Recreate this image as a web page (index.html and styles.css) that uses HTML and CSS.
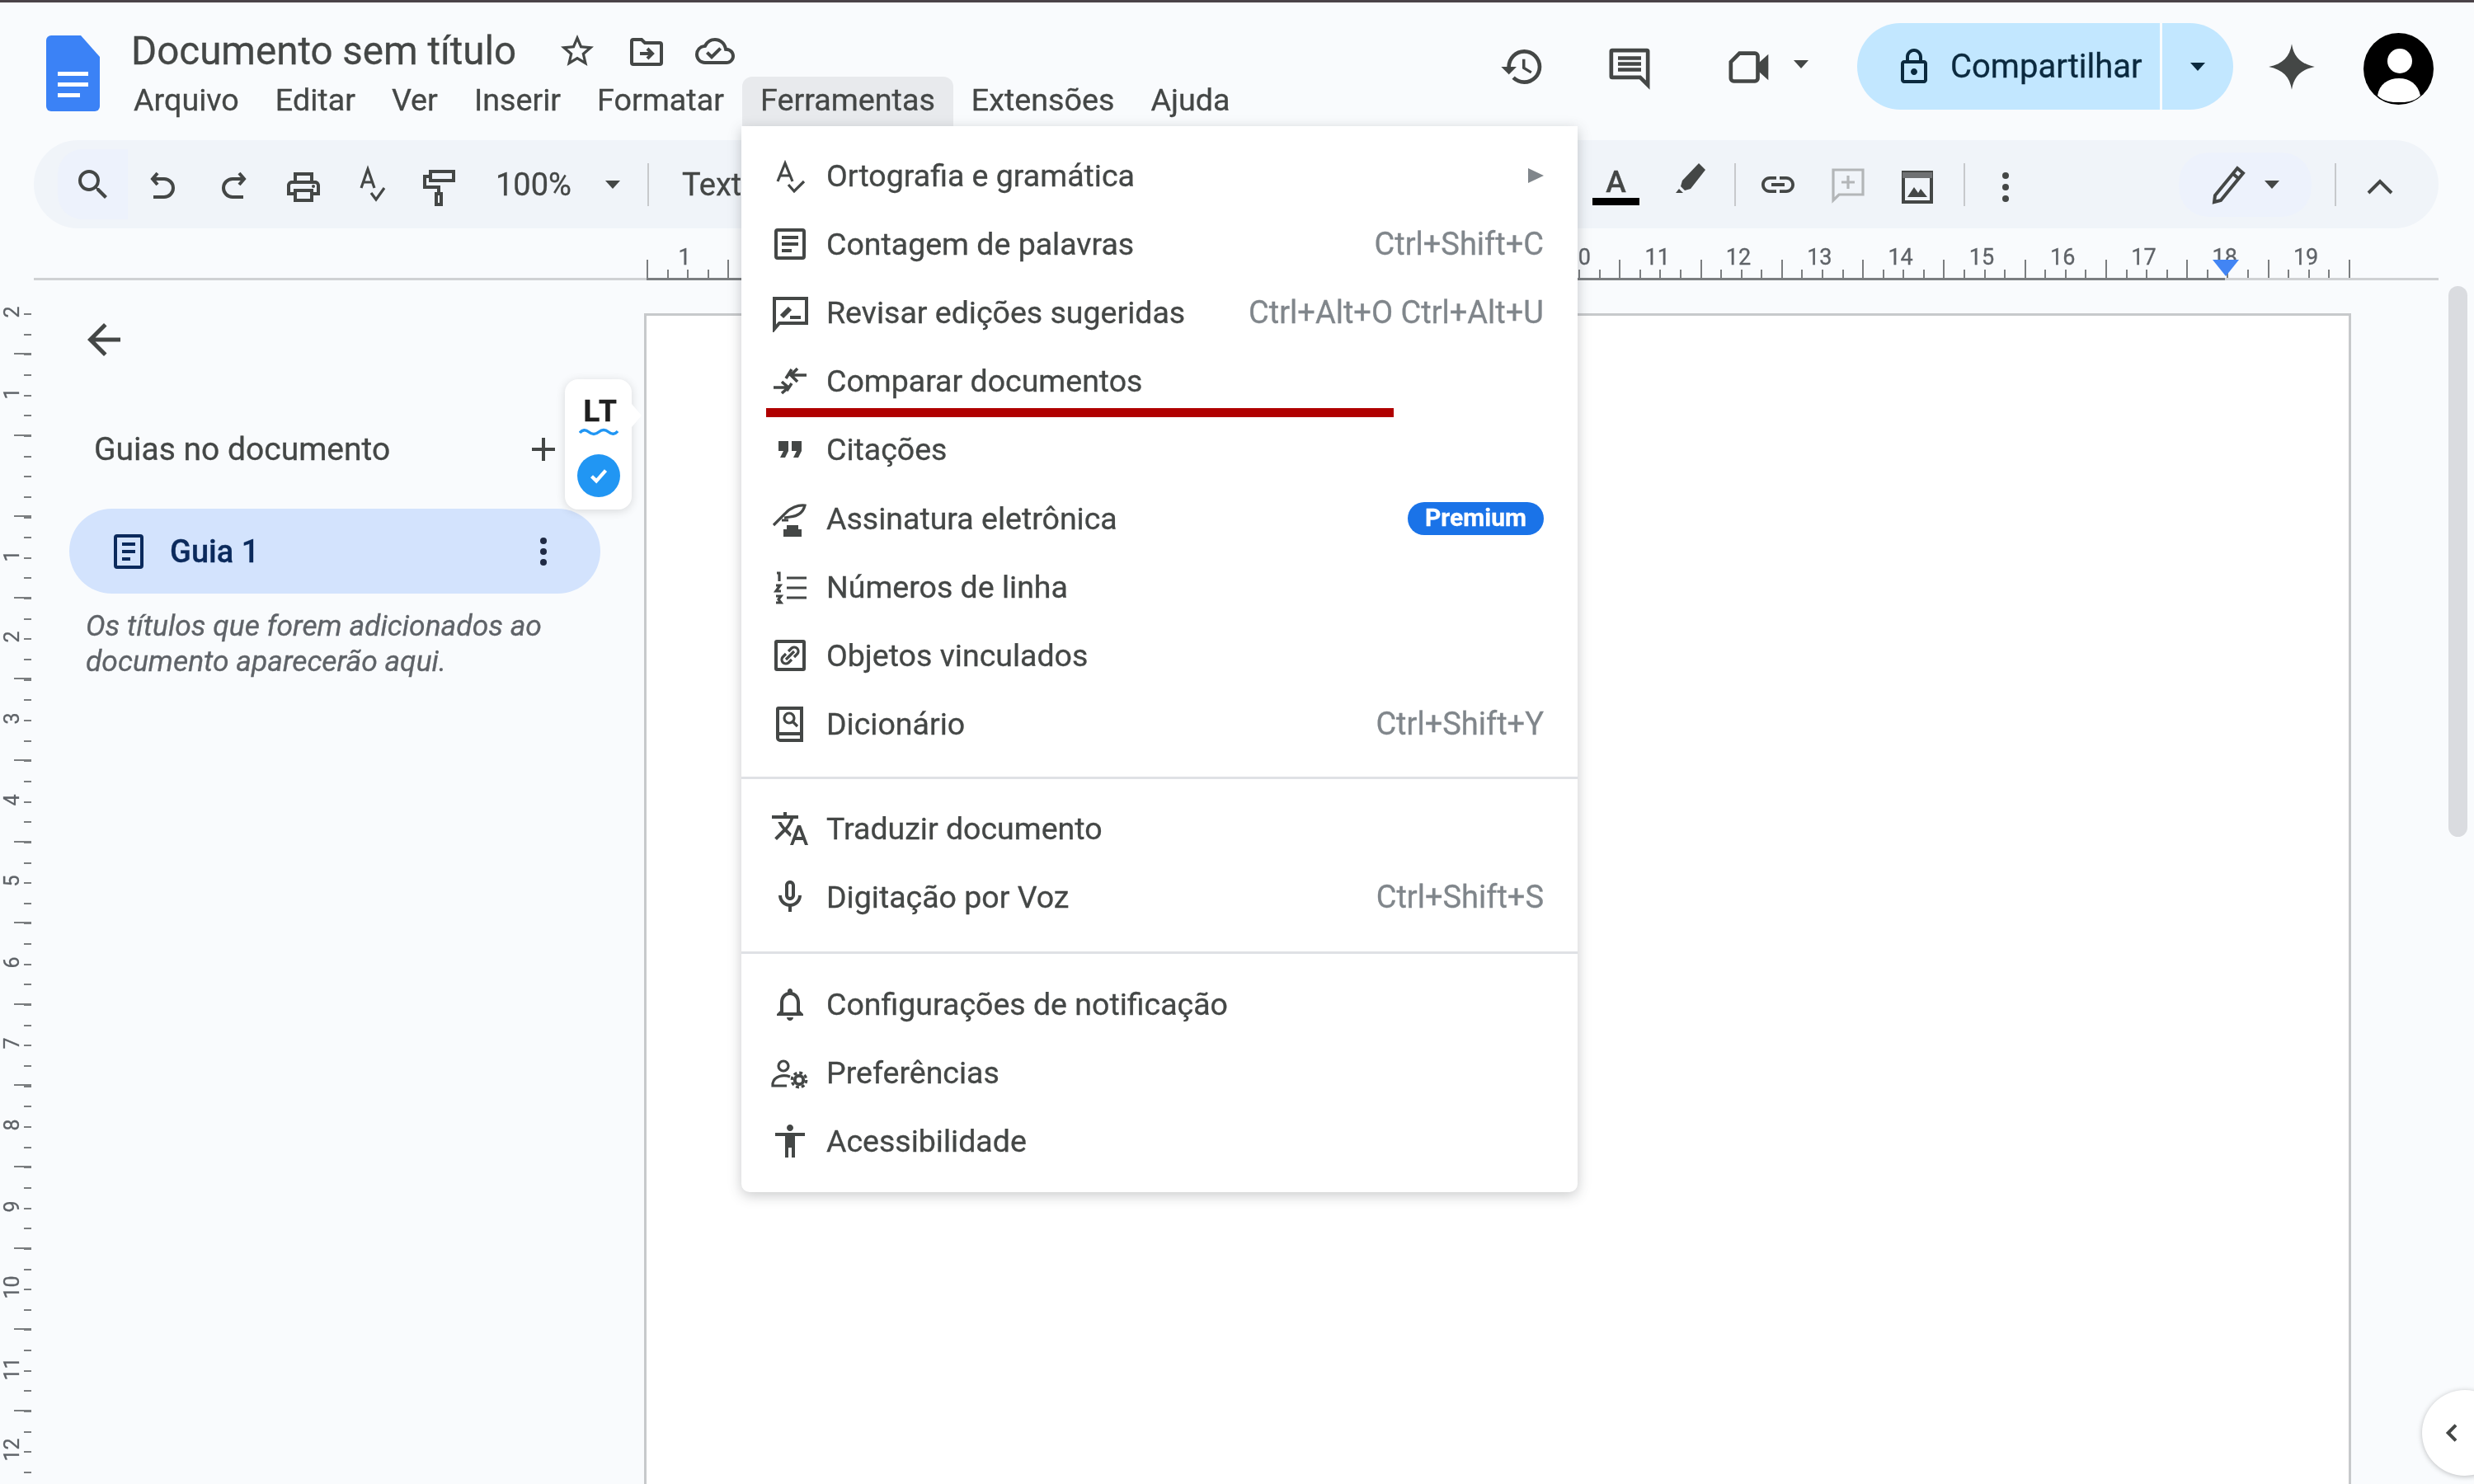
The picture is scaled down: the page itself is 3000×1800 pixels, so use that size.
FILE: index.html
```html
<!DOCTYPE html>
<html lang="pt-BR">
<head>
<meta charset="utf-8">
<title>Documento sem título</title>
<link rel="stylesheet" href="styles.css">
</head>
<body>
<div class="app">
  <div class="topstrip"></div>

  <header class="header">
    <svg class="logo" viewBox="0 0 65 92"><path fill="#3b82f6" d="M6 0H42L65 26V86a6 6 0 0 1-6 6H6a6 6 0 0 1-6-6V6a6 6 0 0 1 6-6z"/><path fill="#fff" d="M14 44h37v5H14zM14 57h37v5H14zM14 70h27v5H14z"/></svg>
    <div class="titlecol">
      <div class="titlerow">
        <span class="doctitle">Documento sem título</span>
        <svg class="ic star" viewBox="0 0 24 24"><path d="M22 9.24l-7.19-.62L12 2 9.19 8.63 2 9.24l5.46 4.73L5.82 21 12 17.27 18.18 21l-1.63-7.03L22 9.24zM12 15.4l-3.76 2.27 1-4.28-3.32-2.88 4.38-.38L12 6.1l1.71 4.04 4.38.38-3.32 2.88 1 4.28L12 15.4z"/></svg>
        <svg class="ic folder" viewBox="0 0 24 24"><path class="st" d="M3 6V19a1 1 0 0 0 1 1H20a1 1 0 0 0 1-1V8a1 1 0 0 0-1-1H11L9 5H4a1 1 0 0 0-1 1zM8 13.5h7M12.500 10.500l3 3-3 3"/></svg>
        <svg class="ic cloud" viewBox="0 0 24 24"><path d="M19.35 10.04A7.49 7.49 0 0 0 12 4C9.11 4 6.6 5.64 5.35 8.04A5.994 5.994 0 0 0 0 14c0 3.31 2.69 6 6 6h13c2.76 0 5-2.24 5-5 0-2.64-2.05-4.78-4.65-4.96zM19 18H6c-2.21 0-4-1.790-4-4 0-2.05 1.53-3.76 3.56-3.97l1.07-.11.5-.95A5.469 5.469 0 0 1 12 6c2.62 0 4.88 1.86 5.39 4.43l.3 1.5 1.53.11A2.98 2.98 0 0 1 22 15c0 1.65-1.35 3-3 3zm-9-3.820l-2.09-2.09L6.5 13.5 10 17l6.010-6.010-1.41-1.41z"/></svg>
      </div>
      <nav class="menubar">
        <span class="mitem">Arquivo</span>
        <span class="mitem">Editar</span>
        <span class="mitem">Ver</span>
        <span class="mitem">Inserir</span>
        <span class="mitem">Formatar</span>
        <span class="mitem mitem-open">Ferramentas</span>
        <span class="mitem">Extensões</span>
        <span class="mitem">Ajuda</span>
      </nav>
    </div>
    <div class="actions">
      <svg class="ic big a-history" viewBox="0 0 24 24"><path d="M13 3a9 9 0 0 0-9 9H1l3.890 3.890.07.14L9 12H6c0-3.870 3.130-7 7-7s7 3.130 7 7-3.130 7-7 7c-1.930 0-3.680-.79-4.940-2.060l-1.420 1.420A8.954 8.954 0 0 0 13 21a9 9 0 0 0 0-18zm-1 5v5l4.280 2.540.72-1.210-3.500-2.080V8H12z"/></svg>
      <svg class="ic big a-comments" viewBox="0 0 24 24"><path class="st" d="M3 3.500H21a.5.5 0 0 1 .5.5V21.500L17.500 17.500H3a.5.5 0 0 1-.5-.5V4a.5.5 0 0 1 .5-.5zM6 7.500H18M6 10.500H18M6 13.500H18"/></svg>
      <svg class="ic big a-camera" viewBox="0 0 24 24"><path class="st" d="M7 5H15a1.500 1.500 0 0 1 1.500 1.500V18a1.500 1.500 0 0 1-1.500 1.500H4A1.500 1.500 0 0 1 2.500 18V9.500z"/><path d="M17 10l5-4.500V19l-5-4.500z"/></svg>
      <span class="caret a-caret"></span>
      <div class="share">
        <div class="share-main">
          <svg class="ic lock" viewBox="0 0 24 24"><path d="M18 8h-1V6c0-2.760-2.240-5-5-5S7 3.240 7 6v2H6c-1.100 0-2 .9-2 2v10c0 1.100.9 2 2 2h12c1.100 0 2-.9 2-2V10c0-1.100-.9-2-2-2zM9 6c0-1.660 1.340-3 3-3s3 1.340 3 3v2H9V6zm9 14H6V10h12v10zm-6-3c1.100 0 2-.9 2-2s-.9-2-2-2-2 .9-2 2 .9 2 2 2z"/></svg>
          <span>Compartilhar</span>
        </div>
        <div class="share-more"><span class="caret caret-dark"></span></div>
      </div>
      <svg class="ic gem" viewBox="0 0 24 24"><path d="M12 0.500C13 7 16.500 10.500 23.500 12 16.500 13.500 13 17 12 23.500 11 17 7.500 13.500 .5 12 7.500 10.500 11 7 12 .5z"/></svg>
      <svg class="avatar" viewBox="0 0 85 87"><ellipse cx="42.500" cy="43.500" rx="42.500" ry="43.500" fill="#000"/><ellipse cx="44" cy="34" rx="15" ry="15" fill="#fff"/><path fill="#fff" d="M17 76C19 62 30 55 43 55S66 62 69 76C60 84 52 84 43 84S26 84 17 76z"/></svg>
    </div>
  </header>

  <div class="toolbar">
    <div class="tb-group">
      <span class="cell cell-search"><svg class="ic" viewBox="0 0 24 24"><path d="M15.500 14h-.79l-.28-.27A6.471 6.471 0 0 0 16 9.500 6.500 6.500 0 1 0 9.500 16c1.610 0 3.090-.59 4.230-1.570l.27.28v.79l5 4.990L20.490 19l-4.990-5zm-6 0C7.010 14 5 11.990 5 9.500S7.010 5 9.500 5 14 7.010 14 9.500 11.990 14 9.500 14z"/></svg></span>
      <span class="cell"><svg class="ic low" viewBox="0 0 24 24"><path class="st" d="M8.500 3.500L5.500 7 8.500 10.500M5.500 7H12.500a5 5 0 0 1 0 11H6"/></svg></span>
      <span class="cell"><svg class="ic low" viewBox="0 0 24 24"><path class="st" d="M15.500 3.500L18.500 7 15.500 10.500M18.500 7H11.500a5 5 0 0 0 0 11H18"/></svg></span>
      <span class="cell"><svg class="ic low" viewBox="0 0 24 24"><path d="M19 8h-1V3H6v5H5c-1.660 0-3 1.340-3 3v6h4v4h12v-4h4v-6c0-1.660-1.340-3-3-3zM8 5h8v3H8V5zm8 12v2H8v-4h8v2zm2-2v-2H6v2H4v-4c0-.55.45-1 1-1h14c.55 0 1 .45 1 1v4h-2z"/><circle cx="18" cy="11.500" r="1"/></svg></span>
      <span class="cell"><svg class="ic" viewBox="0 0 24 24"><path class="st thin" d="M4.500 14L8.500 2.500 12.500 14M6 10.500H11M10.500 17l3 4 5-7"/></svg></span>
      <span class="cell cell-paint"><svg class="ic low" viewBox="0 0 24 24"><path class="st" d="M7 2.500H21V8H7zM7 5.500H3.500V12H12V16M10.500 16H13.500V22.500H10.500z"/></svg></span>
      <span class="zoomval">100%</span>
      <span class="caret zoomcaret"></span>
      <span class="tb-div tb-div-zoom"></span>
      <span class="styletext">Text</span>
    </div>
    <div class="tb-group">
      <span class="cell cell-color"><span class="colorA">A</span><span class="colorbar"></span></span>
      <span class="cell"><svg class="ic high" viewBox="0 0 24 24"><path d="M17.500 2L21.500 6 12.500 17.500 9 18.500 6.500 16 7.500 12.500z"/><path d="M5.500 17.500L8 20H3.500z"/></svg></span>
      <span class="tb-div tb-div-a"></span>
      <span class="cell"><svg class="ic" viewBox="0 0 24 24"><path d="M3.900 12c0-1.710 1.390-3.100 3.100-3.100h4V7H7c-2.760 0-5 2.240-5 5s2.240 5 5 5h4v-1.900H7c-1.710 0-3.100-1.390-3.100-3.100zM8 13h8v-2H8v2zm9-6h-4v1.900h4c1.710 0 3.100 1.390 3.100 3.100s-1.390 3.100-3.100 3.100h-4V17h4c2.760 0 5-2.240 5-5s-2.240-5-5-5z"/></svg></span>
      <span class="cell cell-tight"><svg class="ic" viewBox="0 0 24 24"><path class="st st-grey" d="M3 3H21V18H6.500L3 21.500zM12 6.500V14.500M8 10.500H16"/></svg></span>
      <span class="cell"><svg class="ic low" viewBox="0 0 24 24"><path class="st" d="M3.500 3H20.500V21H3.500z"/><path class="imgbar" d="M3 3h18v3.500H3z"/><path d="M6 18l4-6 2.500 3.500L14 13l4 5z"/></svg></span>
      <span class="tb-div tb-div-b"></span>
      <span class="cell"><svg class="ic low" viewBox="0 0 24 24"><circle cx="12" cy="5" r="2"/><circle cx="12" cy="12" r="2"/><circle cx="12" cy="19" r="2"/></svg></span>
      <span class="editbtn"><svg class="ic" viewBox="0 0 24 24"><path class="st" d="M17.500 2L21 5 7.500 21.500 3.500 22.500 4 18.500zM15 5.500L18.500 8.500"/></svg><span class="caret"></span></span>
      <span class="tb-div tb-div-end"></span>
      <span class="cell"><svg class="ic low" viewBox="0 0 24 24"><path class="st" d="M5 15.500L12 8.500 19 15.500"/></svg></span>
    </div>
  </div>

  <div class="hruler">
    <div class="htrack">
      <div class="hnums"><span>1</span><span></span><span></span><span></span><span></span><span></span><span></span><span></span><span></span><span></span><span></span><span class="hten">0</span><span>11</span><span>12</span><span>13</span><span>14</span><span>15</span><span>16</span><span>17</span><span>18</span><span>19</span></div>
      <span class="indent"></span>
    </div>
  </div>

  <main class="main">
    <div class="vruler">
      <div class="vnums"><span>2</span><span>1</span><span></span><span>1</span><span>2</span><span>3</span><span>4</span><span>5</span><span>6</span><span>7</span><span>8</span><span>9</span><span>10</span><span>11</span><span>12</span></div>
    </div>
    <aside class="sidebar">
      <svg class="ic back" viewBox="0 0 24 24"><path d="M20 11H7.830l5.590-5.590L12 4l-8 8 8 8 1.410-1.410L7.830 13H20v-2z"/></svg>
      <div class="sb-head">
        <span>Guias no documento</span>
        <svg class="ic" viewBox="0 0 24 24"><path d="M19 13h-6v6h-2v-6H5v-2h6V5h2v6h6v2z"/></svg>
      </div>
      <div class="tab">
        <svg class="ic navy" viewBox="0 0 24 24"><path class="st st-navy" d="M5 2.500H19A1 1 0 0 1 20 3.500V20.500A1 1 0 0 1 19 21.500H5A1 1 0 0 1 4 20.500V3.500A1 1 0 0 1 5 2.500zM8 7.500H16M8 12H16M8 16.500H13"/></svg>
        <span class="tabname">Guia 1</span>
        <svg class="ic tabdots" viewBox="0 0 24 24"><circle cx="12" cy="5.500" r="2"/><circle cx="12" cy="12" r="2"/><circle cx="12" cy="18.500" r="2"/></svg>
      </div>
      <p class="hint">Os títulos que forem adicionados ao documento aparecerão aqui.</p>
    </aside>
    <div class="paper"></div>
    <div class="scrollbar"></div>
  </main>

  <div class="ltwidget">
    <span class="lt">LT</span>
    <svg class="wave" viewBox="0 0 48 10"><path d="M1 6Q6 0 12 5T24 5 36 5 47 4" fill="none" stroke="#2196f3" stroke-width="3.500"/></svg>
    <span class="ltcheck"><svg viewBox="0 0 24 24"><path d="M6 12.500l4 4 8-9" fill="none" stroke="#fff" stroke-width="3"/></svg></span>
  </div>

  <div class="sideopen"><svg viewBox="0 0 24 24"><path d="M15 5l-7 7 7 7" fill="none" stroke="#444746" stroke-width="3"/></svg></div>

  <div class="menu">
    <div class="row"><svg class="ic" viewBox="0 0 24 24"><path class="st thin" d="M4.500 15.500L9 4.500 13.500 15.500M6 12H12M11 17.500l3.500 4 6-6"/></svg><span class="label">Ortografia e gramática</span><span class="subarrow"></span></div>
    <div class="row"><svg class="ic" viewBox="0 0 24 24"><path class="st" d="M4.500 3.500H19.500A1 1 0 0 1 20.500 4.500V19.500A1 1 0 0 1 19.500 20.500H4.500A1 1 0 0 1 3.500 19.500V4.500A1 1 0 0 1 4.500 3.500zM7 8H17M7 12H17M7 16H13"/></svg><span class="label">Contagem de palavras</span><span class="kbd">Ctrl+Shift+C</span></div>
    <div class="row"><svg class="ic" viewBox="0 0 24 24"><path class="st" d="M2.500 22V3.500H22V18.500H5.500z"/><path class="st thick" d="M7 14.500L12 9.500"/><path class="st" d="M12 15H18.500"/></svg><span class="label">Revisar edições sugeridas</span><span class="kbd">Ctrl+Alt+O Ctrl+Alt+U</span></div>
    <div class="row"><svg class="ic" viewBox="0 0 24 24"><path class="st bit" d="M13 8.500H22M16.500 4.500L12.500 8.500 16.500 12.500M2 16H10.500M7 12.500L11 16 7 19.500M9.500 10.500L13 5M13 13.500L10 18"/></svg><span class="label">Comparar documentos</span></div>
    <div class="row"><svg class="ic" viewBox="0 0 24 24"><path d="M6 17h3l2-4V7H5v6h3zm8 0h3l2-4V7h-6v6h3z"/></svg><span class="label">Citações</span></div>
    <div class="row"><svg class="ic" viewBox="0 0 24 24"><path class="st thin" d="M2 16L9 9C12 5.500 17 3.500 21 4 20 8 17 10.500 12 11L8.500 11.500M7 13H11"/><path d="M10 16h7v2.500h2V23H8v-4.500h2z"/></svg><span class="label">Assinatura eletrônica</span><span class="badge">Premium</span></div>
    <div class="row"><svg class="ic" viewBox="0 0 24 24"><path class="st thick-l" d="M10 6.500H22M10 12.500H22M10 18.500H22"/><path class="st thin" d="M4 3.500H5.500V8.500M3.500 11H6L3.500 14.500H6.500M3.500 17.500H6.500L5 19.500 6.500 21.500H3.500"/></svg><span class="label">Números de linha</span></div>
    <div class="row"><svg class="ic" viewBox="0 0 24 24"><path class="st" d="M4 3.500H20A.5.5 0 0 1 20.500 4V20A.5.5 0 0 1 20 20.500H4A.5.5 0 0 1 3.500 20V4A.5.5 0 0 1 4 3.500z"/><path class="st thin" d="M11 9.500L13 7.500A2.500 2.500 0 0 1 16.500 11L14.500 13M13 14.500L11 16.500A2.500 2.500 0 0 1 7.500 13L9.500 11M9.500 14.500L14.500 9.500"/></svg><span class="label">Objetos vinculados</span></div>
    <div class="row"><svg class="ic" viewBox="0 0 24 24"><path class="st" d="M5 2.500H19V22H6A1.500 1.500 0 0 1 4.500 20.500V3A.5.5 0 0 1 5 2.500zM4.500 18H19"/><circle class="st thin" cx="11.500" cy="8.500" r="3"/><path class="st thin" d="M13.500 10.500L16.500 13.500"/></svg><span class="label">Dicionário</span><span class="kbd">Ctrl+Shift+Y</span></div>
    <div class="sep sep-a"></div>
    <div class="row"><svg class="ic" viewBox="0 0 24 24"><path d="M12.870 15.070l-2.540-2.510.03-.03c1.740-1.940 2.980-4.170 3.710-6.530H17V4h-7V2H8v2H1v1.990h11.170C11.500 7.920 10.440 9.750 9 11.350 8.070 10.320 7.300 9.190 6.690 8h-2c.73 1.630 1.730 3.170 2.980 4.560l-5.090 5.020L4 19l5-5 3.110 3.110.76-2.040zM18.500 10h-2L12 22h2l1.120-3h4.750L21 22h2l-4.500-12zm-2.620 7l1.620-4.330L19.120 17h-3.240z"/></svg><span class="label">Traduzir documento</span></div>
    <div class="row"><svg class="ic" viewBox="0 0 24 24"><path d="M12 14c1.660 0 3-1.340 3-3V5c0-1.660-1.340-3-3-3S9 3.340 9 5v6c0 1.660 1.340 3 3 3zm-1-9c0-.55.45-1 1-1s1 .45 1 1v6c0 .55-.45 1-1 1s-1-.45-1-1V5zm6 6c0 2.760-2.240 5-5 5s-5-2.240-5-5H5c0 3.530 2.610 6.430 6 6.920V21h2v-3.080c3.390-.49 6-3.390 6-6.920h-2z"/></svg><span class="label">Digitação por Voz</span><span class="kbd">Ctrl+Shift+S</span></div>
    <div class="sep sep-b"></div>
    <div class="row"><svg class="ic" viewBox="0 0 24 24"><path d="M12 22c1.100 0 2-.9 2-2h-4c0 1.100.9 2 2 2zm6-6v-5c0-3.070-1.630-5.640-4.500-6.320V4c0-.83-.67-1.500-1.500-1.500s-1.500.67-1.500 1.500v.68C7.640 5.360 6 7.920 6 11v5l-2 2v1h16v-1l-2-2zm-2 1H8v-6c0-2.480 1.510-4.500 4-4.500s4 2.020 4 4.500v6z"/></svg><span class="label">Configurações de notificação</span></div>
    <div class="row"><svg class="ic" viewBox="0 0 24 24"><circle class="st thin" cx="8" cy="8" r="3"/><path class="st thin" d="M12 14.500C8 13 2.500 14 1.500 18.500V20H10"/><circle class="st gear" cx="17.500" cy="16.500" r="4.400"/><circle class="st" cx="17.500" cy="16.500" r="2.600" stroke-width="2.200"/></svg><span class="label">Preferências</span></div>
    <div class="row"><svg class="ic" viewBox="0 0 24 24"><path d="M12 2c1.100 0 2 .9 2 2s-.9 2-2 2-2-.9-2-2 .9-2 2-2zm9 7h-6v13h-2v-6h-2v6H9V9H3V7h18v2z"/></svg><span class="label">Acessibilidade</span></div>
    <span class="redline"></span>
  </div>
</div>
</body>
</html>
```

FILE: styles.css
```css
* { box-sizing: border-box; }
html, body { margin: 0; padding: 0; }
body { width: 3000px; height: 1800px; overflow: hidden; background: #f9fbfd; }

.app {
  position: relative;
  width: 3000px;
  height: 1800px;
  overflow: hidden;
  display: flex;
  flex-direction: column;
  background: #f9fbfd;
  color: #444746;
  font-family: Roboto, "Liberation Sans", sans-serif;
  -webkit-text-stroke: 0.3px;
  filter: blur(0.7px);
}

.topstrip { height: 3px; background: #4a4348; flex: none; }

/* Shared icon styles */
.ic { width: 48px; height: 48px; fill: #444746; flex: none; display: block; }
.st { fill: none; stroke: #444746; stroke-width: 2; }
.thin { stroke-width: 1.6; }
.bit { stroke-width: 1.8; }
.thick { stroke-width: 3; }
.thick-l { stroke-width: 1.4; }
.gear { stroke-width: 1.600; stroke-dasharray: 2 1.450; }
.st-grey { stroke: #b3b6b8; stroke-width: 1.6; }
.st-navy { stroke: #0b2a5c; }
.low { margin-top: 6px; }
.high { margin-top: -12px; }
.imgbar { fill: #6f7173; }

.caret { width: 0; height: 0; border-left: 9px solid transparent; border-right: 9px solid transparent; border-top: 10px solid #444746; flex: none; display: block; }
.caret-dark { border-top-color: #0b2a3f; }

/* Header */
.header { height: 167px; flex: none; display: flex; align-items: flex-start; padding: 34px 49px 0 56px; }
.logo { width: 65px; height: 92px; flex: none; margin-top: 6px; }
.titlecol { margin-left: 17px; display: flex; flex-direction: column; }
.titlerow { display: flex; align-items: center; height: 50px; margin-bottom: 4px; padding-left: 21px; }
.doctitle { font-size: 47.500px; line-height: 50px; color: #444746; white-space: nowrap; width: 469px; }
.star { margin-left: 48px; }
.folder { margin-left: 36px; }
.cloud { margin-left: 35px; }

.menubar { display: flex; height: 62px; padding-top: 2px; }
.mitem { font-size: 37.700px; line-height: 56px; padding: 0 20px 0 24px; color: #444746; white-space: nowrap; }
.mitem-open { background: #e8eaed; border-radius: 12px 12px 0 0; padding: 0 22px; margin: 0 -2px 0 2px; }

.actions { margin-left: auto; margin-top: -9px; display: flex; align-items: center; height: 105px; }
.big { width: 56px; height: 56px; }
.a-comments { margin-left: 74px; }
.a-camera { margin-left: 89px; }
.a-caret { margin-left: 26px; margin-top: -6px; }
.share { margin-left: 59px; width: 456px; height: 105px; display: flex; background: #c2e7ff; border-radius: 53px; color: #0b2a3f; }
.share-main { width: 370px; display: flex; align-items: center; padding-left: 45px; gap: 20px; font-size: 40px; border-right: 3px solid #f9fbfd; white-space: nowrap; }
.lock { fill: #0b2a3f; }
.share-more { flex: 1; display: flex; align-items: center; justify-content: center; }
.gem { width: 58px; height: 58px; margin-left: 42px; }
.avatar { width: 85px; height: 87px; margin-left: 58px; margin-top: 5px; flex: none; }

/* Toolbar */
.toolbar { flex: none; height: 107px; margin: 0 43px 0 41px; padding: 0 29px; background: #f0f4f9; border-radius: 54px; display: flex; justify-content: space-between; align-items: center; }
.tb-group { display: flex; align-items: center; height: 100%; }
.cell { width: 85px; height: 85px; display: flex; align-items: center; justify-content: center; flex: none; }
.cell-search { background: #edf2fc; border-radius: 30px 0 0 30px; }
.cell-paint { margin-left: -6px; margin-right: 4px; }
.cell-tight { margin-right: -1px; }
.zoomval { font-size: 38px; margin-left: 23px; width: 95px; }
.zoomcaret { margin-left: 38px; }
.tb-div { width: 2px; height: 52px; background: #c7c9cc; flex: none; }
.tb-div-zoom { margin-left: 33px; }
.styletext { font-size: 38px; margin-left: 40px; white-space: nowrap; }
.tb-div-a { margin: 0 8.500px 0 11.500px; }
.tb-div-b { margin: 0 6.500px 0 13.500px; }
.cell-color { flex-direction: column; gap: 2px; padding-top: 6px; margin-right: 4px; }
.colorA { font-size: 37px; line-height: 34px; font-weight: 500; }
.colorbar { width: 57px; height: 9px; background: #000; }
.editbtn { width: 161px; height: 78px; margin-left: 168px; background: #edf2fc; border-radius: 36px; display: flex; align-items: center; padding-left: 36px; gap: 20px; flex: none; }
.tb-div-end { margin: 0 10px 0 28px; }

/* Horizontal ruler */
.hruler { flex: none; height: 63px; margin: 0 43px 0 41px; border-bottom: 3px solid #cfd1d3; }
.htrack {
  position: relative;
  margin-left: 743px;
  width: 2068px;
  height: 60px;
  background:
    repeating-linear-gradient(90deg, #7b7e80 0 2px, transparent 2px 98.280px) 0 100% / 100% 22px no-repeat,
    repeating-linear-gradient(90deg, #7b7e80 0 2px, transparent 2px 24.570px) 0 100% / 100% 10px no-repeat;
}
.htrack::after { content: ""; position: absolute; left: 0; width: 1914px; height: 3px; bottom: -3px; background: #7b7e80; }
.hnums { display: flex; margin-left: -3px; font-size: 27px; line-height: 30px; color: #5f6368; padding-top: 20px; }
.hnums span { width: 98.300px; text-align: center; flex: none; }
.hnums .hten { padding-left: 20px; }
.indent { position: absolute; left: 1899px; top: 38px; width: 0; height: 0; border-left: 16px solid transparent; border-right: 16px solid transparent; border-top: 20px solid #4285f4; z-index: 1; }

/* Main */
.main { flex: 1; min-height: 0; display: flex; align-items: flex-start; }
.vruler {
  flex: none;
  width: 40px;
  height: 100%;
  background:
    repeating-linear-gradient(180deg, transparent 0 48px, #7b7e80 48px 50px, transparent 50px 98.600px) 17px 40px / 21px 100% no-repeat,
    repeating-linear-gradient(180deg, #7b7e80 0 2px, transparent 2px 24.650px) 29px 40px / 9px 100% no-repeat;
}
.vnums { width: 29px; margin-top: -11px; display: flex; flex-direction: column; font-size: 25px; color: #5f6368; }
.vnums span { height: 98.600px; display: flex; align-items: center; justify-content: center; writing-mode: vertical-rl; transform: rotate(180deg); flex: none; line-height: 29px; }

.sidebar { flex: none; width: 741px; padding: 42px 0 0 44px; }
.back { width: 60px; height: 60px; margin-left: 12px; }
.sb-head { display: flex; align-items: center; justify-content: space-between; width: 599px; height: 60px; margin-top: 73px; padding-left: 30px; font-size: 39px; color: #444746; white-space: nowrap; }
.tab { width: 644px; height: 103px; margin-top: 42px; background: #d3e3fd; border-radius: 52px; display: flex; align-items: center; padding-left: 48px; color: #0b2a5c; }
.tabname { font-size: 38px; font-weight: 500; margin-left: 26px; }
.tabdots { margin-left: auto; margin-right: 45px; fill: #1f2a44; }
.hint { width: 610px; margin: 18px 0 0 20px; font-size: 35.400px; line-height: 43px; font-style: italic; color: #5f6368; }

.paper { flex: none; width: 2070px; height: 1500px; margin-top: 40px; background: #fff; border: 3px solid #c7c9cb; border-bottom: 0; }
.scrollbar { flex: none; width: 23px; height: 668px; margin: 7px 0 0 118px; background: #dadce0; border-radius: 12px; }

/* LanguageTool widget */
.ltwidget { position: absolute; left: 685px; top: 460px; width: 81px; height: 158px; background: #fff; border-radius: 16px; box-shadow: 0 2px 12px rgba(0,0,0,.14); display: flex; flex-direction: column; align-items: center; padding-top: 24px; }
.ltwidget::after { content: ""; position: absolute; left: 81px; top: 30px; width: 0; height: 0; border-top: 14px solid transparent; border-bottom: 14px solid transparent; border-left: 12px solid #fff; }
.lt { font-family: "Liberation Mono", monospace; font-size: 38px; line-height: 34px; font-weight: 700; color: #1f1f1f; letter-spacing: -3px; }
.wave { width: 48px; height: 10px; margin-top: 1px; }
.ltcheck { width: 52px; height: 52px; margin-top: 22px; border-radius: 50%; background: #2196f3; display: flex; align-items: center; justify-content: center; }
.ltcheck svg { width: 34px; height: 34px; }

.sideopen { position: absolute; left: 2937px; top: 1686px; width: 104px; height: 104px; border-radius: 50%; background: #fff; box-shadow: 0 1px 6px rgba(0,0,0,.25); padding: 36px 0 0 21px; }
.sideopen svg { width: 32px; height: 32px; display: block; }

/* Tools menu */
.menu { position: absolute; left: 899px; top: 153px; width: 1014px; height: 1293px; background: #fff; border-radius: 0 0 10px 10px; box-shadow: 0 4px 16px rgba(60,64,67,.28); padding-top: 18px; }
.row { height: 83.200px; display: flex; align-items: center; padding: 0 41px 0 35px; font-size: 37.500px; color: #444746; }
.label { margin-left: 20px; white-space: nowrap; }
.kbd { margin-left: auto; font-size: 38px; color: #80868b; white-space: nowrap; }
.subarrow { margin-left: auto; width: 0; height: 0; border-top: 9px solid transparent; border-bottom: 9px solid transparent; border-left: 19px solid #80868b; }
.badge { margin-left: auto; width: 165px; height: 40px; border-radius: 20px; background: #1a73e8; color: #fff; font-size: 30px; line-height: 38px; font-weight: 700; text-align: center; }
.sep { height: 3px; background: #dfe1e5; }
.sep-a { margin: 22px 0 19px; }
.sep-b { margin: 24px 0 19px; }
.redline { position: absolute; left: 30px; top: 342px; width: 761px; height: 11px; background: #b00000; }
```
